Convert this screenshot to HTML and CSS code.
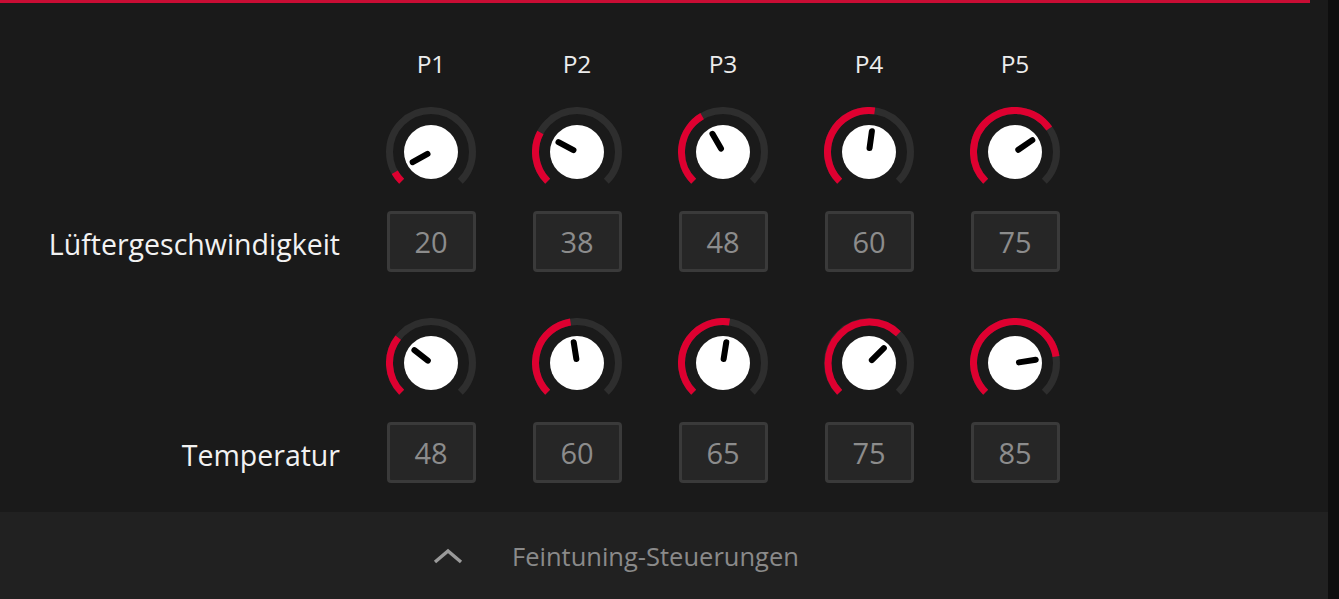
FILE: index.html
```html
<!DOCTYPE html>
<html lang="de">
<head>
<meta charset="utf-8">
<title>Lüfterkurve</title>
<link rel="stylesheet" href="styles.css">
</head>
<body>
<div class="app">
  <div class="topline"></div>
  <main class="content">
    <div class="row header">
      <div class="label"></div>
      <div class="cell">P1</div>
      <div class="cell">P2</div>
      <div class="cell">P3</div>
      <div class="cell">P4</div>
      <div class="cell">P5</div>
    </div>

    <div class="row knobs first">
      <div class="label"></div>
      <div class="cell"><svg class="knob" viewBox="0 0 90 90"><path class="track" d="M15.66 74.34 A41.5 41.5 0 1 1 74.34 74.34"/><path class="level" d="M15.66 74.34 A41.5 41.5 0 0 1 8.75 65.19"/><circle class="dial" cx="45" cy="45" r="27"/><line class="pointer" x1="41.51" y1="46.95" x2="26.65" y2="55.22"/></svg></div>
      <div class="cell"><svg class="knob" viewBox="0 0 90 90"><path class="track" d="M15.66 74.34 A41.5 41.5 0 1 1 74.34 74.34"/><path class="level" d="M15.66 74.34 A41.5 41.5 0 0 1 8.38 25.48"/><circle class="dial" cx="45" cy="45" r="27"/><line class="pointer" x1="41.47" y1="43.12" x2="26.47" y2="35.12"/></svg></div>
      <div class="cell"><svg class="knob" viewBox="0 0 90 90"><path class="track" d="M15.66 74.34 A41.5 41.5 0 1 1 74.34 74.34"/><path class="level" d="M15.66 74.34 A41.5 41.5 0 0 1 24.14 9.12"/><circle class="dial" cx="45" cy="45" r="27"/><line class="pointer" x1="42.99" y1="41.54" x2="34.44" y2="26.85"/></svg></div>
      <div class="cell"><svg class="knob" viewBox="0 0 90 90"><path class="track" d="M15.66 74.34 A41.5 41.5 0 1 1 74.34 74.34"/><path class="level" d="M15.66 74.34 A41.5 41.5 0 0 1 50.73 3.90"/><circle class="dial" cx="45" cy="45" r="27"/><line class="pointer" x1="45.55" y1="41.04" x2="47.90" y2="24.20"/></svg></div>
      <div class="cell"><svg class="knob" viewBox="0 0 90 90"><path class="track" d="M15.66 74.34 A41.5 41.5 0 1 1 74.34 74.34"/><path class="level" d="M15.66 74.34 A41.5 41.5 0 1 1 79.24 21.55"/><circle class="dial" cx="45" cy="45" r="27"/><line class="pointer" x1="48.30" y1="42.74" x2="62.33" y2="33.14"/></svg></div>
    </div>

    <div class="row values">
      <div class="label">Lüftergeschwindigkeit</div>
      <div class="cell"><div class="box">20</div></div>
      <div class="cell"><div class="box">38</div></div>
      <div class="cell"><div class="box">48</div></div>
      <div class="cell"><div class="box">60</div></div>
      <div class="cell"><div class="box">75</div></div>
    </div>

    <div class="row knobs second">
      <div class="label"></div>
      <div class="cell"><svg class="knob" viewBox="0 0 90 90"><path class="track" d="M15.66 74.34 A41.5 41.5 0 1 1 74.34 74.34"/><path class="level" d="M15.66 74.34 A41.5 41.5 0 0 1 12.21 19.56"/><circle class="dial" cx="45" cy="45" r="27"/><line class="pointer" x1="41.84" y1="42.55" x2="28.41" y2="32.13"/></svg></div>
      <div class="cell"><svg class="knob" viewBox="0 0 90 90"><path class="track" d="M15.66 74.34 A41.5 41.5 0 1 1 74.34 74.34"/><path class="level" d="M15.66 74.34 A41.5 41.5 0 0 1 38.51 4.01"/><circle class="dial" cx="45" cy="45" r="27"/><line class="pointer" x1="44.37" y1="41.05" x2="41.72" y2="24.26"/></svg></div>
      <div class="cell"><svg class="knob" viewBox="0 0 90 90"><path class="track" d="M15.66 74.34 A41.5 41.5 0 1 1 74.34 74.34"/><path class="level" d="M15.66 74.34 A41.5 41.5 0 0 1 51.49 4.01"/><circle class="dial" cx="45" cy="45" r="27"/><line class="pointer" x1="45.63" y1="41.05" x2="48.28" y2="24.26"/></svg></div>
      <div class="cell"><svg class="knob" viewBox="0 0 90 90"><path class="track" d="M15.66 74.34 A41.5 41.5 0 1 1 74.34 74.34"/><path class="level" d="M15.66 74.34 A41.5 41.5 0 0 1 74.34 15.66"/><circle class="dial" cx="45" cy="45" r="27"/><line class="pointer" x1="47.83" y1="42.17" x2="59.85" y2="30.15"/></svg></div>
      <div class="cell"><svg class="knob" viewBox="0 0 90 90"><path class="track" d="M15.66 74.34 A41.5 41.5 0 1 1 74.34 74.34"/><path class="level" d="M15.66 74.34 A41.5 41.5 0 1 1 85.99 38.51"/><circle class="dial" cx="45" cy="45" r="27"/><line class="pointer" x1="48.95" y1="44.37" x2="65.74" y2="41.72"/></svg></div>
    </div>

    <div class="row values">
      <div class="label">Temperatur</div>
      <div class="cell"><div class="box">48</div></div>
      <div class="cell"><div class="box">60</div></div>
      <div class="cell"><div class="box">65</div></div>
      <div class="cell"><div class="box">75</div></div>
      <div class="cell"><div class="box">85</div></div>
    </div>
  </main>
  <footer class="footer">
    <svg class="chevron" viewBox="0 0 30 16"><polyline points="2,14 15,3 28,14"/></svg>
    <span class="footer-text">Feintuning-Steuerungen</span>
  </footer>
</div>
</body>
</html>
```
FILE: styles.css
```css
html, body {
  margin: 0;
  padding: 0;
  background: #0e0e0e;
}

body {
  font-family: "Open Sans", "Noto Sans", sans-serif;
  overflow: hidden;
}

.app {
  width: 1328px;
  height: 599px;
  background: #1a1a1a;
  display: flex;
  flex-direction: column;
}

.topline {
  width: 1310px;
  height: 3px;
  background: #c80d34;
  flex: none;
}

.content {
  flex: 1;
  display: flex;
  flex-direction: column;
  padding-top: 44px;
}

.row {
  display: flex;
  align-items: center;
  gap: 36px;
}

.label {
  width: 340px;
  flex: none;
  text-align: right;
  color: #f2f2f2;
  font-size: 28.5px;
  line-height: 40px;
  padding-top: 4px;
}

.cell {
  width: 110px;
  flex: none;
  display: flex;
  justify-content: center;
}

.header {
  height: 32px;
  color: #ececec;
  font-size: 24.5px;
}

.knobs.first {
  margin-top: 28px;
}

.knobs.second {
  margin-top: 46px;
}

.values {
  margin-top: 14px;
}

.knob {
  width: 90px;
  height: 90px;
  display: block;
}

.track,
.level {
  fill: none;
  stroke-width: 7;
  stroke-linecap: butt;
}

.track {
  stroke: #2e2e2e;
}

.level {
  stroke: #de0030;
}

.dial {
  fill: #ffffff;
}

.pointer {
  stroke: #000000;
  stroke-width: 6;
  stroke-linecap: round;
}

.box {
  width: 83px;
  height: 55px;
  border: 3px solid #3a3a3a;
  border-radius: 4px;
  background: #262626;
  color: #8c8c8c;
  font-size: 29px;
  display: flex;
  align-items: center;
  justify-content: center;
}

.footer {
  height: 87px;
  flex: none;
  background: #212121;
  display: flex;
  align-items: center;
  padding-left: 433px;
}

.chevron {
  width: 30px;
  height: 16px;
  fill: none;
  stroke: #9a9a9a;
  stroke-width: 3.4;
  margin-top: 0;
}

.footer-text {
  margin-left: 49px;
  color: #8a8a8a;
  font-size: 25.5px;
}
```
